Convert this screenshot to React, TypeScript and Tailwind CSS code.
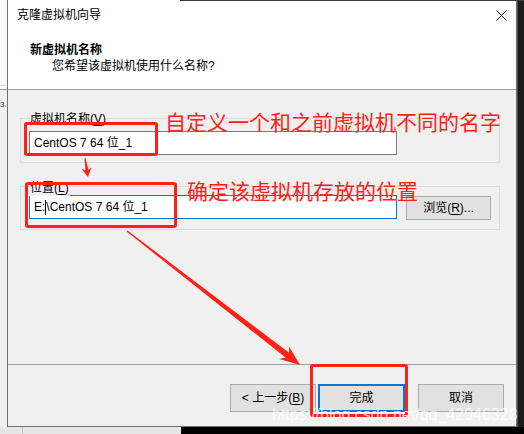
import React from "react";

function Mn({ children }: { children: React.ReactNode }) {
  return <span className="underline underline-offset-2">{children}</span>;
}

function Btn({ children, primary }: { children: React.ReactNode; primary?: boolean }) {
  return (
    <div
      className={
        primary
          ? "flex h-[28px] w-[87px] items-center justify-center border-2 border-[#0078d7] bg-[#e1e1e1]"
          : "flex h-[28px] w-[86px] items-center justify-center border border-[#adadad] bg-[#e1e1e1]"
      }
    >
      {children}
    </div>
  );
}

export default function App() {
  return (
    <div className="relative flex h-[434px] w-[524px] flex-col overflow-hidden bg-[#f0f0f0] font-['Liberation_Sans','Noto_Sans_CJK_SC',sans-serif] text-[12px] leading-[16px] text-black">
      <div className="flex h-[427px]">
        {/* background window edge */}
        <div className="flex w-[7px] flex-col overflow-hidden">
          <div className="flex h-[89px] items-end bg-[#f8f8f8] text-[6px] leading-[10px] text-[#333]">…</div>
          <div className="h-px bg-[#a0a0a0]" />
          <div className="pt-[9px] text-[8px] leading-[12px] text-[#333]">3.</div>
        </div>

        {/* dialog */}
        <div className="flex w-[510px] flex-col border-x border-b border-[#6f6f6f] bg-[#f0f0f0]">
          <div className="h-[90px] border-b border-[#a0a0a0] bg-white">
            <div className="flex h-[30px] items-center justify-between pl-[9px] pr-[9px]">
              <span>克隆虚拟机向导</span>
              <svg width="11" height="11" viewBox="0 0 11 11">
                <path d="M0.5 0.5 L10.5 10.5 M10.5 0.5 L0.5 10.5" stroke="#111" strokeWidth="1" />
              </svg>
            </div>
            <div className="mt-[12px] pl-[22px] font-bold">新虚拟机名称</div>
            <div className="pl-[44px]">您希望该虚拟机使用什么名称?</div>
          </div>

          <div className="flex flex-1 flex-col pl-[12px] pr-[16px]">
            <div className="relative mt-[28px] h-[45px] border border-[#dcdcdc]">
              <span className="absolute -top-[8px] left-[8px] bg-[#f0f0f0] px-[1px]">
                虚拟机名称(<Mn>V</Mn>)
              </span>
              <div className="ml-[8px] mt-[12px] flex h-[24px] w-[368px] items-center border border-[#7a7a7a] bg-white pl-[4px]">
                CentOS 7 64 位_1
              </div>
            </div>

            <div className="relative mt-[23px] h-[44px] border border-[#dcdcdc]">
              <span className="absolute -top-[7px] left-[8px] bg-[#f0f0f0] px-[1px]">
                位置(<Mn>L</Mn>)
              </span>
              <div className="ml-[8px] mt-[8px] flex items-start">
                <div className="flex h-[24px] w-[368px] items-center border border-[#0078d7] bg-white pl-[4px]">
                  E:<span className="h-[15px] w-px bg-black" />\CentOS 7 64 位_1
                </div>
                <div className="ml-[9px] mt-[1px] flex h-[24px] w-[85px] items-center justify-center border border-[#adadad] bg-[#e1e1e1]">
                  浏览(<Mn>R</Mn>)...
                </div>
              </div>
            </div>
          </div>

          <div className="flex h-[62px] justify-end border-t border-[#a0a0a0] pr-[12px] pt-[19px]">
            <Btn>
              &lt; 上一步(<Mn>B</Mn>)
            </Btn>
            <div className="ml-[2px]">
              <Btn primary>完成</Btn>
            </div>
            <div className="ml-[13px]">
              <Btn>取消</Btn>
            </div>
          </div>
        </div>

        <div className="w-[7px] border-l border-[#4a4a4a] bg-[#1c1c1c]" />
      </div>

      <div className="flex h-[7px]">
        <div className="flex w-[181px] bg-[#e6e6e6]">
          <div className="ml-[22px] w-px bg-[#c4c4c4]" />
        </div>
        <div className="flex-1 bg-black" />
      </div>

      {/* screenshot top edge */}
      <div className="absolute left-[180px] right-0 top-0 h-px bg-[#3a3a3a]" />

      {/* red annotations */}
      <div className="absolute left-[24px] top-[122px] h-[34px] w-[134px] rounded-[3px] border-[3px] border-[#ff2116]" />
      <div className="absolute left-[25px] top-[182px] h-[46px] w-[152px] rounded-[3px] border-[3px] border-[#ff2116]" />
      <div className="absolute left-[310px] top-[364px] h-[53px] w-[98px] rounded-[3px] border-[3px] border-[#ff2116]" />

      <div className="absolute left-[165px] top-[109px] whitespace-nowrap font-['Noto_Sans_CJK_SC',sans-serif] text-[21px] leading-[24px] text-[#ff2116]">
        自定义一个和之前虚拟机不同的名字
      </div>
      <div className="absolute left-[187px] top-[178px] whitespace-nowrap font-['Noto_Sans_CJK_SC',sans-serif] text-[21px] leading-[24px] text-[#ff2116]">
        确定该虚拟机存放的位置
      </div>

      <svg className="pointer-events-none absolute left-0 top-0" width="524" height="434" viewBox="0 0 524 434">
        <polygon
          fill="#ff2116"
          points="85.5,157.9 88.4,169.9 91.5,167.3 88,177 81.7,168.9 85.4,170.3 84.5,158.1"
        />
        <polygon
          fill="#ff2116"
          points="127.4,230.4 289.1,352.8 289.1,346.5 300,365 279.3,359.1 285.5,357.6 126.6,231.6"
        />
      </svg>

      {/* watermark */}
      <div className="absolute left-[272px] top-[405px] whitespace-nowrap font-['Liberation_Sans',sans-serif] text-[16px] leading-[20px] text-white/75">
        https://blog.csdn.net/qq_42946328
      </div>
    </div>
  );
}
